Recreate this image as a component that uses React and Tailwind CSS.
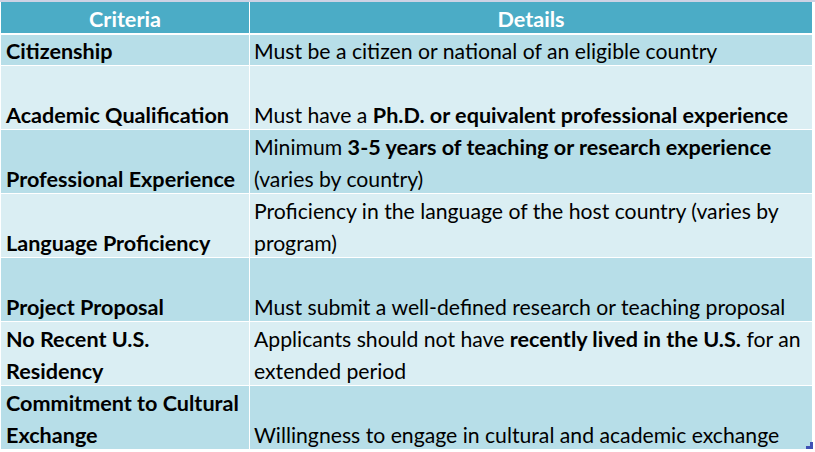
import React from 'react';

const rows = [
	{
		label: [ 'Citizenship' ],
		detail: [ [ 'Must be a citizen or national of an eligible country' ] ],
		short: true,
	},
	{
		label: [ 'Academic Qualification' ],
		detail: [
			[ 'Must have a ', { b: 'Ph.D. or equivalent professional experience' } ],
		],
	},
	{
		label: [ 'Professional Experience' ],
		detail: [
			[ 'Minimum ', { b: '3-5 years of teaching or research experience' } ],
			[ '(varies by country)' ],
		],
	},
	{
		label: [ 'Language Proficiency' ],
		detail: [
			[ 'Proficiency in the language of the host country (varies by' ],
			[ 'program)' ],
		],
	},
	{
		label: [ 'Project Proposal' ],
		detail: [ [ 'Must submit a well-defined research or teaching proposal' ] ],
	},
	{
		label: [ 'No Recent U.S.', 'Residency' ],
		detail: [
			[ 'Applicants should not have ', { b: 'recently lived in the U.S.' }, ' for an' ],
			[ 'extended period' ],
		],
	},
	{
		label: [ 'Commitment to Cultural', 'Exchange' ],
		detail: [ [ 'Willingness to engage in cultural and academic exchange' ] ],
	},
];

function Line( { parts } ) {
	return (
		<div className="whitespace-nowrap">
			{ parts.map( ( p, i ) =>
				typeof p === 'string' ? (
					<span key={ i }>{ p }</span>
				) : (
					<span key={ i } className="font-bold text-[21.6px]">
						{ p.b }
					</span>
				)
			) }
		</div>
	);
}

export default function App() {
	return (
		<div
			className="relative w-[815px] h-[452px] bg-white overflow-hidden text-[21.2px] leading-[32px] text-black"
			style={ { fontFamily: 'Lato, "Liberation Sans", sans-serif' } }
		>
			<div className="h-[2px] bg-[#cdd2e4]" />
			<div className="flex flex-col pl-[1px] pr-[3px]">
				{ /* header */ }
				<div className="flex h-[31px] bg-[#4bacc6] text-white font-bold text-[21.6px]">
					<div className="w-[249px] flex items-end justify-center border-r border-white">
						<span className="translate-y-[2px]">Criteria</span>
					</div>
					<div className="flex-1 flex items-end justify-center">
						<span className="translate-y-[2px]">Details</span>
					</div>
				</div>
				<div className="h-[2px]" />
				{ rows.map( ( row, i ) => (
					<div
						key={ i }
						className={ `flex border-b border-white ${
							row.short ? 'h-[31px]' : 'h-[64px]'
						} ${ i % 2 === 0 ? 'bg-[#b7dee8]' : 'bg-[#daeef3]' }` }
					>
						<div className="w-[249px] shrink-0 flex flex-col justify-end pl-[5px] font-bold text-[21.6px] border-r border-white">
							<div className="translate-y-[2px]">
								{ row.label.map( ( l, j ) => (
									<div key={ j } className="whitespace-nowrap">
										{ l }
									</div>
								) ) }
							</div>
						</div>
						<div className="flex-1 flex flex-col justify-end pl-[4px]">
							<div className="translate-y-[2px]">
								{ row.detail.map( ( parts, j ) => (
									<Line key={ j } parts={ parts } />
								) ) }
							</div>
						</div>
					</div>
				) ) }
			</div>
			{ /* table resize handle */ }
			<svg
				className="absolute left-[806px] top-[442px]"
				width="7"
				height="7"
				viewBox="0 0 7 7"
			>
				<path d="M4 0h3v7H0V4h4z" fill="#3f51b5" />
			</svg>
		</div>
	);
}
